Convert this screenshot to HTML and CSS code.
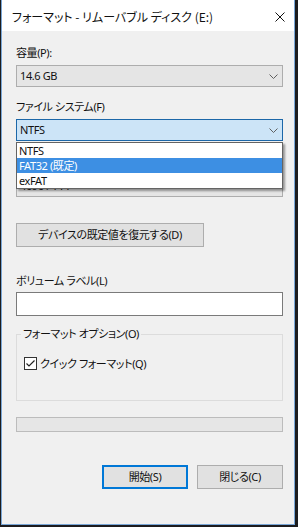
FILE: index.html
```html
<!DOCTYPE html>
<html lang="ja">
<head>
<meta charset="utf-8">
<title>フォーマット - リムーバブル ディスク (E:)</title>
<link rel="stylesheet" href="styles.css">
</head>
<body>
<div class="window">
  <div class="titlebar">
    <span class="title">フォーマット - リムーバブル ディスク (E:)</span>
    <svg class="close" viewBox="0 0 10 10" width="10" height="10"><path d="M0.5 0.5 L9.5 9.5 M9.5 0.5 L0.5 9.5" stroke="#111" stroke-width="1" fill="none"/></svg>
  </div>
  <div class="content">
    <div class="label l1">容量(P):</div>
    <div class="combo">
      <span class="value">14.6 GB</span>
      <svg class="chev" viewBox="0 0 9 5" width="9" height="5"><polyline points="0.5,0.5 4.5,4.5 8.5,0.5" stroke="#606060" fill="none" stroke-width="1"/></svg>
    </div>
    <div class="label l2">ファイル システム(F)</div>
    <div class="combo-wrap">
      <div class="combo open">
        <span class="value">NTFS</span>
        <svg class="chev" viewBox="0 0 9 5" width="9" height="5"><polyline points="0.5,0.5 4.5,4.5 8.5,0.5" stroke="#606060" fill="none" stroke-width="1"/></svg>
      </div>
      <ul class="dropdown">
        <li>NTFS</li>
        <li class="sel">FAT32 (既定)</li>
        <li>exFAT</li>
      </ul>
    </div>
    <div class="label l3">アロケーション ユニット サイズ(A)</div>
    <div class="combo">
      <span class="value">4096 バイト</span>
      <svg class="chev" viewBox="0 0 9 5" width="9" height="5"><polyline points="0.5,0.5 4.5,4.5 8.5,0.5" stroke="#606060" fill="none" stroke-width="1"/></svg>
    </div>
    <button class="btn restore">デバイスの既定値を復元する(D)</button>
    <div class="label l4">ボリューム ラベル(L)</div>
    <div class="textbox"></div>
    <fieldset class="group">
      <legend>フォーマット オプション(O)</legend>
      <div class="check">
        <span class="box"><svg viewBox="0 0 11 11" width="11" height="11"><polyline points="1.5,5.5 4,8 9.5,2.5" stroke="#222" stroke-width="1.2" fill="none"/></svg></span>
        <span>クイック フォーマット(Q)</span>
      </div>
    </fieldset>
    <div class="progress"></div>
    <div class="actions">
      <button class="btn default">開始(S)</button>
      <button class="btn">閉じる(C)</button>
    </div>
  </div>
</div>
</body>
</html>
```
FILE: styles.css
```css
* { box-sizing: border-box; }
html, body { margin: 0; padding: 0; }
body {
  background: #1c1c1e;
  width: 298px;
  height: 527px;
  overflow: hidden;
  font-family: "Noto Sans", "Noto Sans CJK JP", sans-serif;
  font-size: 11px;
  letter-spacing: -0.4px;
  font-feature-settings: "palt" 1;
  color: #111;
}
.window {
  margin-left: 1px;
  width: 294px;
  height: 525px;
  border: 1px solid #79a6d6;
  border-top: none;
  background: #f0f0f0;
  display: flex;
  flex-direction: column;
}
.titlebar {
  height: 31px;
  flex: none;
  background: #fff;
  display: flex;
  align-items: center;
  padding: 2px 0 0 10px;
}
.title {
  flex: 1;
  line-height: 16px;
  white-space: nowrap;
  font-family: "Noto Sans CJK JP", sans-serif;
  font-size: 12px;
  letter-spacing: 0;
}
.close { display: block; margin-right: 9px; }
.content {
  padding: 14px 11px 0 14px;
  display: flex;
  flex-direction: column;
  align-items: flex-start;
}
.label { line-height: 16px; height: 16px; white-space: nowrap; }
.l2 { margin-top: 12px; }
.l3 { margin-top: 14px; visibility: hidden; }
.l4 { margin-top: 26px; }
.combo {
  width: 267px;
  height: 22px;
  margin-top: 4px;
  border: 1px solid #adadad;
  background: #e5e5e5;
  display: flex;
  align-items: center;
  justify-content: space-between;
  padding: 0 4px 0 3px;
  line-height: 16px;
}
.chev { display: block; }
.combo-wrap { position: relative; margin-top: 4px; }
.combo-wrap .combo { margin-top: 0; }
.combo.open { background: #cce4f7; border-color: #1c67a8; }
.dropdown {
  position: absolute;
  left: 0;
  top: 23px;
  width: 267px;
  margin: 0;
  padding: 0;
  list-style: none;
  background: #fff;
  border: 1px solid #646464;
  box-shadow: 2px 2px 2px rgba(0, 0, 0, 0.38);
  z-index: 2;
}
.dropdown li { height: 15px; line-height: 15px; padding-left: 2px; }
.dropdown li.sel { background: #3d8fe3; color: #fff; }
.btn {
  font: inherit;
  letter-spacing: inherit;
  font-feature-settings: "palt" 1;
  color: #111;
  background: #e1e1e1;
  border: 1px solid #adadad;
  height: 24px;
  padding: 0;
  margin: 0;
  line-height: 16px;
}
.restore { width: 188px; margin-top: 26px; }
.textbox {
  width: 267px;
  height: 24px;
  margin-top: 3px;
  background: #fff;
  border: 1px solid #7a7a7a;
}
.group {
  width: 267px;
  margin: 10px 0 0 0;
  padding: 0 0 30px 4px;
  border: 1px solid #dcdcdc;
  min-inline-size: 0;
}
.group legend { padding: 0 2px; line-height: 16px; }
.check {
  display: flex;
  align-items: center;
  height: 13px;
  margin: 15px 0 0 3px;
  gap: 3px;
  line-height: 16px;
  white-space: nowrap;
}
.box {
  width: 13px;
  height: 13px;
  border: 1px solid #333;
  background: #fff;
  display: block;
}
.box svg { display: block; }
.progress {
  width: 267px;
  height: 15px;
  margin-top: 16px;
  background: #e6e6e6;
  border: 1px solid #bcbcbc;
}
.actions {
  width: 267px;
  margin-top: 33px;
  display: flex;
  justify-content: flex-end;
  gap: 9px;
}
.actions .btn { width: 86px; }
.btn.default { border: 2px solid #0078d7; }
```
